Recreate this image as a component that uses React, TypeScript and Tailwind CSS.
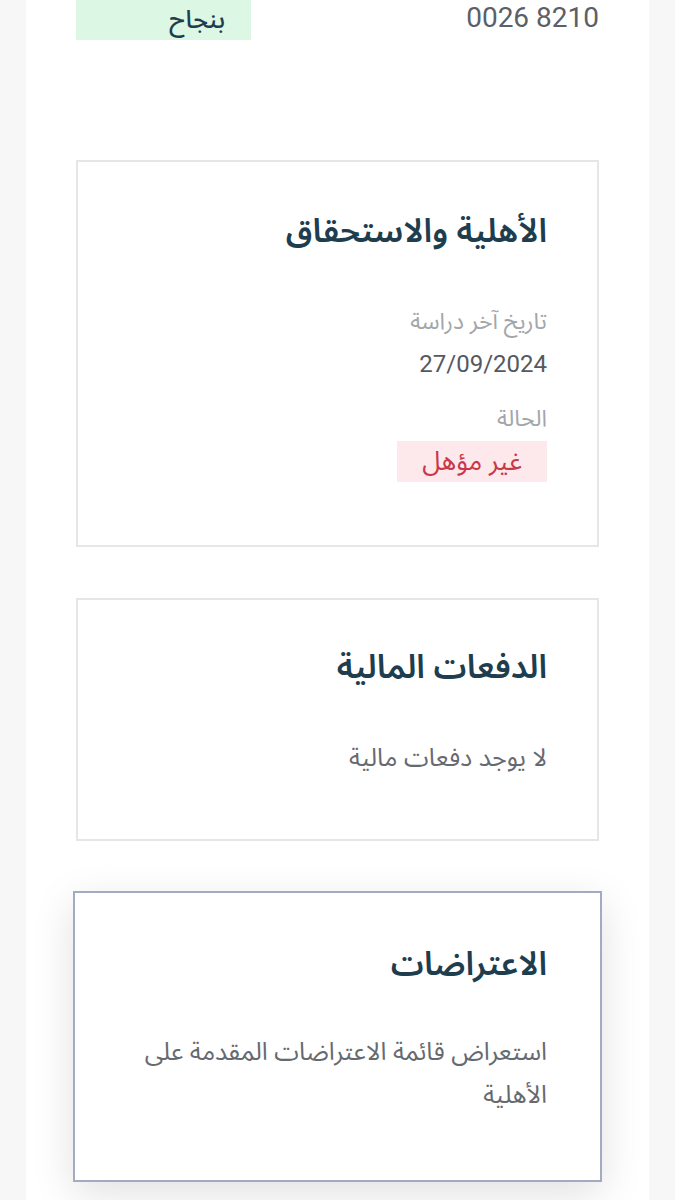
import React from "react";

const AR = { fontFamily: '"Noto Sans Arabic", "Noto Sans", "DejaVu Sans", sans-serif' };

function Card({ title, children, className = "" }: { title: string; children: React.ReactNode; className?: string }) {
  return (
    <section className={`bg-white ${className}`}>
      <h2 className="text-[33px] leading-[40px] font-semibold text-[#1e3d4e]">{title}</h2>
      {children}
    </section>
  );
}

export default function App() {
  return (
    <div dir="rtl" style={AR} className="min-h-[1200px] bg-[#f7f7f7] px-[26px]">
      <div className="min-h-[1200px] bg-white px-[50px] pb-[18px]">
        {/* status row */}
        <div className="flex h-[40px] items-start justify-between">
          <span className="font-['Roboto',sans-serif] text-[28px] leading-[36px] text-[#5b6068]" dir="ltr">
            0026 8210
          </span>
          <span className="flex h-[40px] w-[175px] items-center bg-[#dcf8e5] pr-[26px] text-[25px] leading-[34px] font-medium text-[#1e3d4e]">
            بنجاح
          </span>
        </div>

        <Card title="الأهلية والاستحقاق" className="mt-[120px] border-2 border-[#e6e6e6] px-[50px] pt-[50px] pb-[63px]">
          <p className="mt-[55px] text-[23px] leading-[30px] text-[#a3a6ab]">تاريخ آخر دراسة</p>
          <p className="mt-[11px] font-['Roboto',sans-serif] text-[24px] leading-[32px] text-[#55595f]">27/09/2024</p>
          <p className="mt-[24px] text-[23px] leading-[30px] text-[#a3a6ab]">الحالة</p>
          <span className="mt-[7px] inline-flex h-[41px] items-center bg-[#fde9eb] px-[25px] text-[26px] leading-[34px] text-[#c8374a]">
            غير مؤهل
          </span>
        </Card>

        <Card title="الدفعات المالية" className="mt-[51px] border-2 border-[#e6e6e6] px-[50px] pt-[48px] pb-[66px]">
          <p className="mt-[55px] text-[25px] leading-[30px] text-[#666a70]">لا يوجد دفعات مالية</p>
        </Card>

        <Card
          title="الاعتراضات"
          className="-mx-[3px] mt-[50px] border-2 border-[#a3abc3] px-[53px] pt-[52px] pb-[63px] shadow-[0_12px_40px_rgba(0,0,0,0.12)]"
        >
          <p className="mt-[46px] text-[25px] leading-[43px] text-[#666a70]">
            استعراض قائمة الاعتراضات المقدمة على الأهلية
          </p>
        </Card>
      </div>
    </div>
  );
}
